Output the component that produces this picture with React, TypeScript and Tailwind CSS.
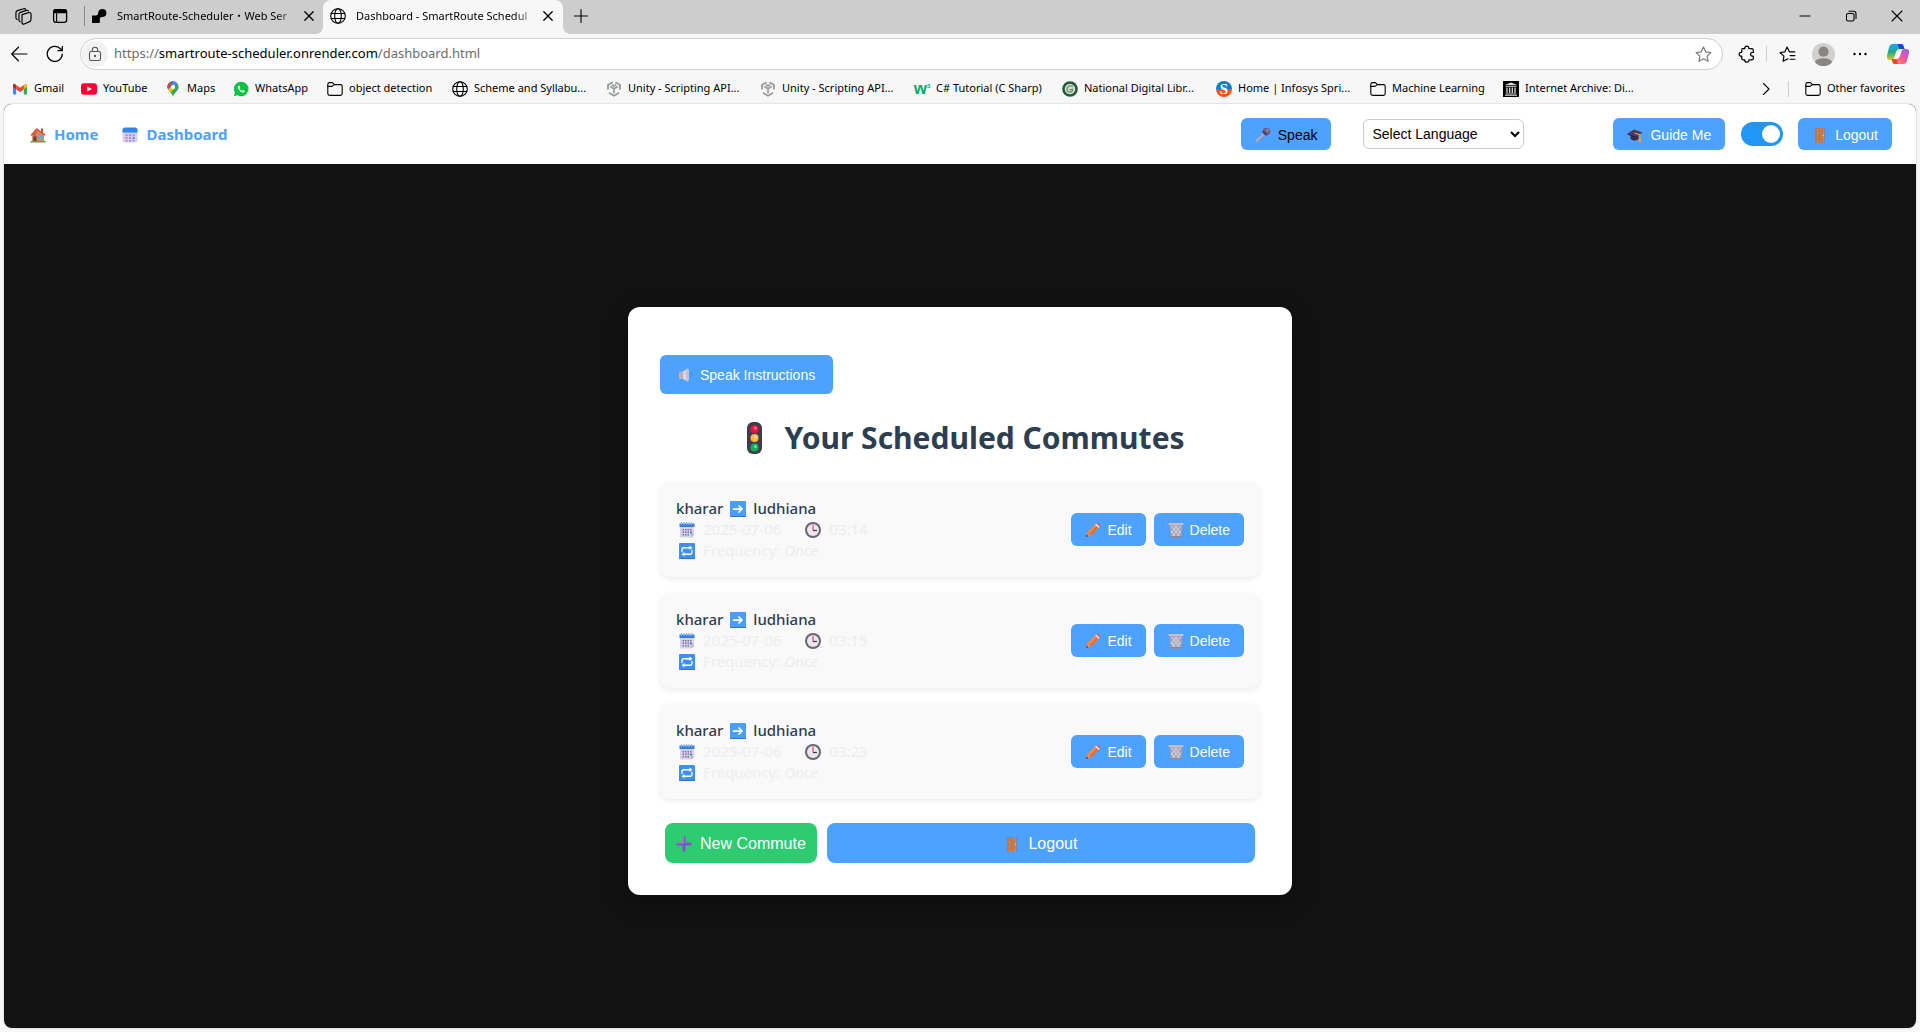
import type { ReactNode } from "react";

/* ---------- browser icons ---------- */

type IconProps = { className?: string; children?: ReactNode };

function Line({ className = "size-4", children }: IconProps) {
  return (
    <svg viewBox="0 0 16 16" className={className} fill="none" stroke="currentColor" strokeWidth="1.1" strokeLinecap="round" strokeLinejoin="round" aria-hidden="true">
      {children}
    </svg>
  );
}

const CloseIcon = () => <Line className="size-4"><path d="M3.8 3.8 L12.2 12.2 M12.2 3.8 L3.8 12.2" strokeWidth="1.3" /></Line>;

const Globe = () => (
  <Line className="size-4 shrink-0">
    <circle cx="8" cy="8" r="7.3" />
    <ellipse cx="8" cy="8" rx="3.3" ry="7.3" />
    <path d="M1.2 5.5h13.6M1.2 10.5h13.6" />
  </Line>
);

const Folder = () => (
  <Line className="size-4 shrink-0">
    <path d="M.8 3.5 Q.8 1.6 2.6 1.6 H5.4 L7.4 3.6 H13.4 Q15.2 3.6 15.2 5.4 V12.6 Q15.2 14.4 13.4 14.4 H2.6 Q.8 14.4 .8 12.6 Z" />
    <path d="M.8 5.4 H5 L7.4 3.6" />
  </Line>
);

const Workspaces = () => (
  <Line className="size-[17px]">
    <path d="M6.6 6.2 L12.8 4.3 Q15 3.8 15.1 5.8 V10.8 Q15.1 12.2 13.8 12.8 L8.8 15 Q6.6 15.6 6.6 13.6 Z" />
    <path d="M4.8 13 Q3.7 12.6 3.7 11.4 V6 Q3.7 4.6 5 4.1 L10.8 2.2 Q12.2 1.9 12.6 2.9" />
    <path d="M2 10.8 Q.9 10.4 .9 9.2 V4.4 Q.9 3 2.2 2.5 L8.2 .7 Q9.4 .4 10 1.2" />
  </Line>
);

const TabActions = () => (
  <Line className="size-4">
    <rect x="1.6" y="1.6" width="13" height="12.8" rx="2.4" strokeWidth="1.3" />
    <path d="M1.6 4 Q1.6 1.6 4 1.6 H12.2 Q14.6 1.6 14.6 4 V4.6 H1.6Z" fill="currentColor" />
    <path d="M4.6 4.6 V14.2" />
  </Line>
);

const RenderLogo = () => (
  <svg viewBox="0 0 16 16" className="size-4 shrink-0" aria-hidden="true">
    <path d="M11.2 1 A4 4 0 0 1 11.6 9 C9.8 9 9 9.6 8.8 11 V15 H1 V7.4 H4.8 C6.2 7.4 7 6.8 7.2 5.2 A4 4 0 0 1 11.2 1Z" fill="#000" />
  </svg>
);

const Gmail = () => (
  <svg viewBox="0 0 16 16" className="size-4 shrink-0" aria-hidden="true">
    <path d="M1 4.2V12.6Q1 13.6 2 13.6H4.2V6.6Z" fill="#4285f4" />
    <path d="M15 4.2V12.6Q15 13.6 14 13.6H11.8V6.6Z" fill="#34a853" />
    <path d="M11.8 4.2 13 3.1Q14.9 2.1 15 4.3V5.8L11.8 8.2Z" fill="#fbbc04" />
    <path d="M4.2 4.2 3 3.1Q1.1 2.1 1 4.3V5.8L4.2 8.2Z" fill="#c5221f" />
    <path d="M4.2 3.9 8 6.8 11.8 3.9V8.2L8 11 4.2 8.2Z" fill="#ea4335" />
  </svg>
);

const YouTube = () => (
  <svg viewBox="0 0 16 16" className="size-4 shrink-0" aria-hidden="true">
    <rect x="0" y="2.2" width="16" height="11.6" rx="3" fill="#ff0033" />
    <path d="M6.2 5.4 11 8 6.2 10.6Z" fill="#fff" />
  </svg>
);

const Maps = () => (
  <svg viewBox="0 0 16 16" className="size-4 shrink-0" aria-hidden="true">
    <clipPath id="pin"><path d="M8 .3A5.6 5.6 0 0 0 2.4 5.9C2.4 10 6.8 10.8 8 15.8 9.2 10.8 13.6 10 13.6 5.9A5.6 5.6 0 0 0 8 .3Z" /></clipPath>
    <g clipPath="url(#pin)">
      <rect width="16" height="16" fill="#34a853" />
      <path d="M0 0H8L9 4 4 9 0 5Z" fill="#1a73e8" />
      <path d="M0 0H5.8L7 3 3 7 0 6Z" fill="#ea4335" />
      <path d="M6 0H14L12 4 8 6Z" fill="#4285f4" />
      <path d="M2 9 9 3 10 7 4 13Z" fill="#fbbc04" />
    </g>
    <circle cx="8" cy="5.9" r="2" fill="#fff" />
  </svg>
);

const WhatsApp = () => (
  <svg viewBox="0 0 16 16" className="size-4 shrink-0" aria-hidden="true">
    <path d="M8.2 .8A7.2 7.2 0 1 1 4.6 14.2L.8 15.2 1.9 11.6A7.2 7.2 0 0 1 8.2 .8Z" fill="#0fc144" />
    <path d="M5.8 4.4Q4.3 5.2 5 7.2 6.3 10.3 9.2 11.5 11.4 11.9 11.8 9.9L9.9 8.9 9 9.9Q7.3 9.2 6.5 7.4L7.2 6.5 6.5 4.5Z" fill="#fff" />
  </svg>
);

const Unity = () => (
  <svg viewBox="0 0 16 16" className="size-4 shrink-0" fill="none" stroke="#999c9e" strokeWidth="1.9" aria-hidden="true">
    <path d="M6.6 1.3 2 4V8.600M9.400 1.300 14 4V8.600M3 11.800 8 14.700 13 11.800" />
    <path d="M4.200 5.600 8 7.800 11.800 5.600M8 7.800V12.300M5.800 3.800 8 5 10.200 3.800" strokeWidth="1.700" />
  </svg>
);

const W3 = () => (
  <span className="flex w-4 shrink-0 items-start justify-center font-['Liberation_Sans'] font-bold leading-none text-[#04aa6d]" aria-hidden="true">
    <span className="text-[17px] leading-3">w</span>
    <span className="text-[6px] leading-none">3</span>
  </span>
);

const Library = () => (
  <svg viewBox="0 0 16 16" className="size-4 shrink-0" aria-hidden="true">
    <circle cx="8" cy="8" r="7.8" fill="#1f5a33" />
    <circle cx="8" cy="8" r="5.3" fill="#d3dccf" />
    <path d="M11.2 5.2Q6 4 5 7.5 4.8 11.2 8 11.2 10.8 10.8 10.6 8.2L7.3 8.9" fill="none" stroke="#6f9479" strokeWidth="1.3" />
  </svg>
);

const Springboard = () => (
  <span className="grid size-4 shrink-0 place-items-center rounded-full bg-linear-to-b from-[#0c7fc4] from-50% to-[#f4511e] to-50% font-['Liberation_Serif'] text-[15px] font-bold leading-4 text-white" aria-hidden="true">S</span>
);

const Archive = () => (
  <svg viewBox="0 0 16 16" className="size-4 shrink-0" aria-hidden="true">
    <rect width="16" height="16" fill="#000" />
    <path d="M8 1.5 14 4H2ZM2.5 4.8h11v1h-11zM2.5 12.6h11v.8h-11zM2 14.2h12v.9H2z" fill="#ddd" />
    <path d="M4 6.4v5.7M6.7 6.4v5.7M9.3 6.4v5.7M12 6.4v5.7" stroke="#ddd" strokeWidth="1.3" />
  </svg>
);

const starPath = "M8 1 10.1 5.5 15 6.1 11.4 9.5 12.3 14.4 8 12 3.7 14.4 4.6 9.5 1 6.1 5.9 5.5Z";

const Copilot = () => (
  <svg viewBox="0 0 24 24" className="size-6" aria-hidden="true">
    <defs>
      <linearGradient id="cpA" x1="0" y1="0" x2="0" y2="1"><stop offset="0" stopColor="#19a7f0" /><stop offset=".5" stopColor="#24a88a" /><stop offset="1" stopColor="#f0c419" /></linearGradient>
      <linearGradient id="cpB" x1="1" y1="0" x2="0" y2="1"><stop offset="0" stopColor="#9b5cf0" /><stop offset=".5" stopColor="#f0579b" /><stop offset="1" stopColor="#ffa047" /></linearGradient>
    </defs>
    <path d="M6.5 2H15.5Q17 2 17.5 4L18.5 7H14Q11 7 10 10L8 16Q7.5 18 5.5 18H4Q0 18 1.2 12.5L3 5.5Q4 2 6.5 2Z" fill="url(#cpA)" />
    <path d="M12 2h3.5Q17 2 17.5 4L18.5 7H14.5Q13 7 12.5 5Z" fill="#1747c4" />
    <path d="M17.5 22H8.5Q7 22 6.5 20L5.5 17H10Q13 17 14 14L16 8Q16.5 7 18.5 7H20Q24 7 22.8 12L21 18.5Q20 22 17.5 22Z" fill="url(#cpB)" />
    <path d="M5.5 17H9.5Q11 17 11.5 19.5L12 22H8.5Q7 22 6.5 20Z" fill="#ee4a2b" />
  </svg>
);

/* ---------- page pictograms ---------- */

function Pic({ className = "size-4", children }: IconProps) {
  return <svg viewBox="0 0 32 32" className={`${className} shrink-0`} aria-hidden="true">{children}</svg>;
}

const House = () => (
  <Pic>
    <path d="M22 3h4v9h-4z" fill="#a5573c" />
    <path d="M5 14 14 6 28 14V29H5Z" fill="#d9895b" />
    <path d="M14 6 5 15V29H12V14Z" fill="#b96f4c" />
    <path d="M13 2 31 15 29 17.5 14 7 3 18 1 16Z" fill="#e2563a" />
    <path d="M7 19h6v10H7z" fill="#6b3f37" />
    <path d="M18 16h7v8h-7z" fill="#4fb5f2" />
    <path d="M1 28h30v3H1z" fill="#3fae55" />
  </Pic>
);

const Calendar = () => (
  <Pic>
    <rect x="1" y="2" width="30" height="29" rx="4" fill="#d9cdf0" />
    <path d="M1 11V6Q1 1 6 1H26Q31 1 31 6V11Z" fill="#2f86ea" />
    <path d="M7 15h4v3.500H7zM14 15h4v3.500h-4zM21 15h4v3.500h-4zM7 20.500h4V24H7zM14 20.500h4V24h-4zM7 26h4v3H7zM14 26h4v3h-4zM21 26h4v3h-4z" fill="#9a8fb8" />
    <path d="M21 20.500h4V24h-4z" fill="#2f86ea" />
  </Pic>
);

const SpiralCalendar = () => (
  <Pic>
    <path d="M2 4H30V25L25 31H4Q2 31 2 29Z" fill="#d8d0ea" />
    <path d="M30 25 25 31V25Z" fill="#a89cc6" />
    <path d="M1 3H31V10H1Z" fill="#3b7fdc" />
    <path d="M5 0v6M10 0v6M15 0v6M20 0v6M25 0v6" stroke="#8bb4ee" strokeWidth="2" />
    <path d="M7 14h3v3H7zM12 14h3v3h-3zM17 14h3v3h-3zM7 19h3v3H7zM12 19h3v3h-3zM17 19h3v3h-3zM7 24h3v3H7zM12 24h3v3h-3zM17 24h3v3h-3zM22 14h3v3h-3z" fill="#7d7397" />
    <path d="M22 19h4v4h-4z" fill="#2f86ea" />
  </Pic>
);

const Mic = () => (
  <Pic>
    <path d="M18 11 22 15 5 30 2 29 1.500 27Z" fill="#9a93a3" />
    <path d="M18 11 20 13 3 29.500 2 29 1.500 27Z" fill="#b9b3c0" />
    <circle cx="23" cy="9" r="7.500" fill="#6d5c80" />
    <path d="M16.500 7 25 16 22 17 15 10Z" fill="#463a56" />
    <circle cx="25" cy="6.500" r="3" fill="#94839f" />
  </Pic>
);

const Cap = () => (
  <Pic>
    <path d="M7 15V24Q15 30 23 24V15Z" fill="#3c2a48" />
    <path d="M1 13 14 5 31 11 18 20Z" fill="#4b3a5c" />
    <path d="M1 13 18 20V22L1 15Z" fill="#2c1f38" />
    <path d="M15 12 26 16V26" fill="none" stroke="#f09a45" strokeWidth="2.500" />
    <path d="M24 23h4l1 7h-6z" fill="#f09a45" />
  </Pic>
);

const Door = () => (
  <Pic>
    <path d="M7 2H25V31H7Z" fill="#b5673f" />
    <path d="M9 3H24V31H9Z" fill="#d08758" />
    <path d="M12 6h9v6h-9zM12 15h9v5h-9zM12 23h9v5h-9z" fill="#c47b4d" stroke="#b56c44" />
    <circle cx="22.500" cy="17" r="1.300" fill="#f7d070" />
  </Pic>
);

const Speaker = () => (
  <Pic>
    <path d="M2 9H11V24H2Z" fill="#b8afbf" />
    <path d="M10 9 19 3Q22 3 22 16 22 29 19 29L10 24Z" fill="#ddd6e2" />
    <ellipse cx="19" cy="16" rx="3" ry="13" fill="#c7bfd0" />
    <path d="M25 10Q29 16 25 22" fill="none" stroke="#3689e8" strokeWidth="2" strokeDasharray="3 2" />
  </Pic>
);

const TrafficLight = () => (
  <svg viewBox="0 0 15 32" className="h-8 w-[15px] shrink-0" aria-hidden="true">
    <rect x="0" y="0" width="15" height="32" rx="6" fill="#433b4d" />
    <circle cx="7.500" cy="7" r="4" fill="#e8173f" />
    <circle cx="7.500" cy="16" r="4" fill="#fbb548" />
    <circle cx="7.500" cy="25.500" r="4" fill="#0fae5c" />
    <circle cx="8.500" cy="6" r="1.500" fill="#ff7d95" />
    <circle cx="8.500" cy="15" r="1.500" fill="#ffe0a0" />
    <circle cx="8.500" cy="24.500" r="1.500" fill="#6fe3a0" />
  </svg>
);

const ArrowBox = () => (
  <Pic>
    <rect width="32" height="32" rx="2" fill="#4b9ef8" />
    <path d="M0 30h32v2H0z" fill="#3575d8" />
    <path d="M7 16H24M18 10 24 16 18 22" fill="none" stroke="#fff" strokeWidth="3.500" strokeLinecap="round" strokeLinejoin="round" />
  </Pic>
);

const RepeatBox = () => (
  <Pic>
    <rect width="32" height="32" rx="2" fill="#3f8ff2" />
    <path d="M0 30h32v2H0z" fill="#3575d8" />
    <path d="M6 17V13Q6 9.500 9 9.500H22M26 15V19Q26 22.500 23 22.500H10" fill="none" stroke="#fff" strokeWidth="2.600" strokeLinecap="round" />
    <path d="M21 5 27 9.500 21 14ZM11 18 5 22.500 11 27Z" fill="#fff" />
  </Pic>
);

const Clock = () => (
  <Pic>
    <circle cx="16" cy="16" r="16" fill="#6a6470" />
    <circle cx="16" cy="16" r="12" fill="#ebe6ef" />
    <path d="M16 17V5.500" stroke="#f04863" strokeWidth="2.500" />
    <path d="M16 17H24" stroke="#433b4d" strokeWidth="2.500" />
  </Pic>
);

const Pencil = () => (
  <Pic>
    <path d="M5 20 20 5 27 12 12 27Z" fill="#f7883f" />
    <path d="M8.500 23.500 23.500 8.500 27 12 12 27Z" fill="#e96c35" />
    <path d="M20 5 22.500 2.500 29.500 9.500 27 12Z" fill="#f3dfe3" />
    <path d="M22.500 2.500Q25 0 28 3T29.500 9.500Z" fill="#f2555f" />
    <path d="M5 20 12 27 2 30Z" fill="#f08a4a" />
    <path d="M3.500 25 6.800 28.500 2 30Z" fill="#433b4d" />
  </Pic>
);

const Bin = () => (
  <Pic>
    <path d="M3 5H29L26 31H6Z" fill="#a9a5b4" />
    <path d="M7 8 24 29M13 7 25 22M7 18 15 30M25 8 8 29M19 7 6 22M25 18 17 30" stroke="#e2e6f0" strokeWidth="1.500" />
    <path d="M1 2H31V6H1Z" fill="#c4bfce" />
    <path d="M5 28H27V31H5Z" fill="#8b8596" />
  </Pic>
);

const PlusPic = () => (
  <Pic>
    <path d="M13 1h6v12h12v6H19v12h-6V19H1v-6h12z" fill="#7d57c4" />
    <path d="M13 1h2.500v14H1v-2h12z" fill="#a487dd" />
  </Pic>
);

/* ---------- data ---------- */

const bookmarks = [
  { label: "Gmail", icon: <Gmail />, width: "w-[69px]" },
  { label: "YouTube", icon: <YouTube />, width: "w-[84px]" },
  { label: "Maps", icon: <Maps />, width: "w-[68px]" },
  { label: "WhatsApp", icon: <WhatsApp />, width: "w-[94px]" },
  { label: "object detection", icon: <Folder />, width: "w-[125px]" },
  { label: "Scheme and Syllabu...", icon: <Globe />, width: "w-[154px]" },
  { label: "Unity - Scripting API...", icon: <Unity />, width: "w-[154px]" },
  { label: "Unity - Scripting API...", icon: <Unity />, width: "w-[154px]" },
  { label: "C# Tutorial (C Sharp)", icon: <W3 />, width: "w-[148px]" },
  { label: "National Digital Libr...", icon: <Library />, width: "w-[154px]" },
  { label: "Home | Infosys Spri...", icon: <Springboard />, width: "w-[154px]" },
  { label: "Machine Learning", icon: <Folder />, width: "w-[133px]" },
  { label: "Internet Archive: Di...", icon: <Archive />, width: "w-[154px]" },
];

const commutes = [
  { from: "kharar", to: "ludhiana", date: "2025-07-06", time: "03:14", frequency: "Once" },
  { from: "kharar", to: "ludhiana", date: "2025-07-06", time: "03:15", frequency: "Once" },
  { from: "kharar", to: "ludhiana", date: "2025-07-06", time: "03:23", frequency: "Once" },
];

/* ---------- sections ---------- */

function TabStrip() {
  return (
    <header className="flex h-[34px] items-center bg-[#cdcdcd] text-[11px]">
      <div className="flex h-full items-center pb-0.5">
        <button aria-label="Workspaces" className="ml-[15px]"><Workspaces /></button>
        <button aria-label="Tab actions" className="ml-5"><TabActions /></button>
        <div className="ml-4 h-5 w-px bg-[#8a8a8a]" />
        <div className="flex w-[238px] items-center pl-1.5">
          <RenderLogo />
          <span className="ml-2.5 flex-1 whitespace-nowrap [mask-image:linear-gradient(to_right,black_86%,transparent)]">
            SmartRoute-Scheduler・Web Ser
          </span>
          <button aria-label="Close tab" className="mr-1.5"><CloseIcon /></button>
        </div>
      </div>
      <div className="relative flex h-full w-[240px] items-center rounded-t-lg bg-[#f7f7f7] pb-0.5 pl-[7px]">
        <span className="absolute bottom-0 -left-2 size-2 bg-[radial-gradient(circle_at_0_0,#cdcdcd_8px,#f7f7f7_8px)]" />
        <span className="absolute -right-2 bottom-0 size-2 bg-[radial-gradient(circle_at_100%_0,#cdcdcd_8px,#f7f7f7_8px)]" />
        <Globe />
        <span className="ml-2.5 flex-1 whitespace-nowrap [mask-image:linear-gradient(to_right,black_86%,transparent)]">
          Dashboard - SmartRoute Schedul
        </span>
        <button aria-label="Close tab" className="mr-[7px]"><CloseIcon /></button>
      </div>
      <div className="flex h-full flex-1 items-center pb-0.5">
        <button aria-label="New tab" className="ml-2.5"><Line><path d="M8 1.5V14.5M1.5 8H14.5" /></Line></button>
        <div className="ml-auto flex items-center gap-[30px] pr-[15px]">
          <button aria-label="Minimize"><Line><path d="M3 8H13" /></Line></button>
          <button aria-label="Restore">
            <Line><rect x="3.5" y="5.5" width="7.5" height="7.5" rx="1.5" /><path d="M6 3.3H10.5Q13 3.3 13 6V10.5" /></Line>
          </button>
          <button aria-label="Close window"><Line><path d="M3 3 13 13M13 3 3 13" /></Line></button>
        </div>
      </div>
    </header>
  );
}

function Toolbar() {
  return (
    <div className="flex h-10 items-center">
      <button aria-label="Back" className="ml-2.5"><Line className="size-[18px]"><path d="M15 8H1.5M7.5 2 1.5 8 7.5 14" /></Line></button>
      <button aria-label="Refresh" className="ml-[18px]">
        <Line className="size-[18px]"><path d="M14.5 8A6.7 6.7 0 1 1 12.5 3.1L14.3 4.8M14.5 1.2V5H10.6" /></Line>
      </button>
      <div className="ml-4 flex h-8 flex-1 items-center rounded-full border border-[#cfcfcf] bg-white pr-2.5 pl-px">
        <span className="grid size-[26px] place-items-center rounded-full bg-[#f2f2f2] text-[#555]">
          <Line><rect x="2.5" y="5.5" width="11" height="9" rx="1.8" /><path d="M5.3 5.5V4Q5.3 1.2 8 1.2T10.7 4V5.5" /><circle cx="8" cy="10" r=".6" fill="currentColor" /></Line>
        </span>
        <div className="ml-1.5 flex-1 text-[13px] text-[#6b6b6b]">
          https://<span className="text-black">smartroute-scheduler.onrender.com</span>/dashboard.html
        </div>
        <button aria-label="Add to favorites" className="text-[#777]"><Line className="size-[17px]"><path d={starPath} /></Line></button>
      </div>
      <div className="ml-[15px] flex items-center">
        <button aria-label="Extensions">
          <Line className="size-[18px]"><path d="M3.6 3.3H6Q5.8 1 7.8 1T9.7 3.3H12.3Q13.6 3.3 13.6 4.6V6.6Q11.2 6.4 11.2 8.2T13.6 9.9V12Q13.6 13.3 12.3 13.3H9.7Q9.8 15.3 7.9 15.3T6 13.3H4.6Q3.3 13.3 3.3 12V9.9Q1 10.1 1 8.2T3.3 6.5V4.3" /></Line>
        </button>
        <div className="ml-2.5 h-4 w-px bg-[#cfcfcf]" />
        <button aria-label="Favorites" className="ml-3">
          <Line className="size-[17px]"><path d="M8.5 12 3.9 14.4 4.6 9.5 1 6.1 5.6 5.5 7.6 1 9.8 5.5H15M10.5 9H15M10.5 12.5H15" /></Line>
        </button>
        <button aria-label="Profile" className="ml-4">
          <svg viewBox="0 0 24 24" className="size-[23px]" aria-hidden="true"><clipPath id="av"><circle cx="12" cy="12" r="12" /></clipPath><circle cx="12" cy="12" r="12" fill="#d2d0ce" /><circle cx="12" cy="9" r="5.3" fill="#8a8580" /><ellipse cx="12" cy="21" rx="9" ry="5.2" fill="#8a8580" clipPath="url(#av)" /></svg>
        </button>
        <button aria-label="Settings and more" className="ml-[17px]">
          <Line><g fill="currentColor" stroke="none"><circle cx="2.5" cy="8" r="1.2" /><circle cx="8" cy="8" r="1.2" /><circle cx="13.5" cy="8" r="1.2" /></g></Line>
        </button>
        <button aria-label="Copilot" className="mr-2.5 ml-[18px]"><Copilot /></button>
      </div>
    </div>
  );
}

function BookmarksBar() {
  return (
    <nav aria-label="Favorites bar" className="flex h-[29px] items-center pl-3 text-[11px]">
      {bookmarks.map((b, i) => (
        <a key={i} href="#" className={`flex shrink-0 items-center gap-1.5 whitespace-nowrap ${b.width}`}>
          {b.icon}
          {b.label}
        </a>
      ))}
      <button aria-label="More favorites" className="ml-auto"><Line><path d="M5.5 2.5 11 8 5.5 13.5" /></Line></button>
      <div className="ml-3.5 h-4 w-px bg-[#cfcfcf]" />
      <a href="#" className="mr-[15px] ml-4 flex items-center gap-1.5 whitespace-nowrap">
        <Folder />
        Other favorites
      </a>
    </nav>
  );
}

function SiteNav() {
  const pill = "flex h-8 items-center gap-[7px] rounded-md bg-[#4da1ff] px-3.5 pt-px font-['Liberation_Sans',sans-serif] text-sm";
  return (
    <nav className="flex h-[60px] items-center bg-white pr-6 pl-[26px]">
      <a href="#" className="flex items-center gap-2 pt-px text-[15px] font-bold text-[#4da1ff]"><House />Home</a>
      <a href="#" className="ml-6 flex items-center gap-2 pt-px text-[15px] font-bold text-[#4da1ff]"><Calendar />Dashboard</a>
      <button className={`${pill} ml-auto text-black`}><Mic />Speak</button>
      <select aria-label="Language" className="ml-8 h-[30px] w-[161px] rounded-md border border-[#ccc] bg-white px-1 font-['Liberation_Sans',sans-serif] text-sm">
        <option>Select Language</option>
      </select>
      <button className={`${pill} ml-[89px] text-white`}><Cap />Guide Me</button>
      <label className="ml-4 flex h-6 w-[42px] cursor-pointer items-center rounded-full bg-[#ccc] px-[3px] has-checked:justify-end has-checked:bg-[#2196f3]">
        <input type="checkbox" defaultChecked aria-label="Dark mode" className="sr-only" />
        <span className="size-[18px] rounded-full bg-white" />
      </label>
      <button className={`${pill} ml-[15px] text-white`}><Door />Logout</button>
    </nav>
  );
}

function CommuteItem({ c }: { c: (typeof commutes)[number] }) {
  const action = "flex h-[33px] items-center gap-1.5 rounded-md bg-[#4da1ff] px-3.5 pt-px font-['Liberation_Sans',sans-serif] text-sm text-white";
  return (
    <li className="flex items-center justify-between rounded-[10px] bg-[#f9f9f9] p-4 shadow-[0_2px_6px_rgba(0,0,0,0.08)]">
      <div className="text-[15px] leading-[21px] text-[#eee]">
        <p className="flex items-center gap-[7px] font-medium text-[#2c3e50]">{c.from}<ArrowBox />{c.to}</p>
        <p className="flex items-center gap-2 pl-[3px]">
          <SpiralCalendar />{c.date}
          <span className="ml-4 flex items-center gap-2"><Clock />{c.time}</span>
        </p>
        <p className="flex items-center gap-2 pl-[3px]"><RepeatBox /><span>Frequency: <em>{c.frequency}</em></span></p>
      </div>
      <div className="flex gap-2">
        <button className={action}><Pencil />Edit</button>
        <button className={action}><Bin />Delete</button>
      </div>
    </li>
  );
}

export default function App() {
  return (
    <div className="flex min-h-screen flex-col bg-[#f7f7f7] font-['Noto_Sans','Noto_Sans_CJK_JP',sans-serif] text-black">
      <TabStrip />
      <Toolbar />
      <BookmarksBar />
      <div className="mx-1 mt-px mb-1 flex flex-1 flex-col overflow-hidden rounded-lg bg-[#121212] shadow-[0_0_2px_rgba(0,0,0,0.25)]">
        <SiteNav />
        <main className="flex flex-1 items-center justify-center pt-2.5">
          <section className="w-full max-w-[664px] rounded-xl bg-white px-8 pt-12 pb-8 shadow-[0_8px_24px_rgba(0,0,0,0.3)]">
            <button className="flex h-[39px] items-center gap-1.5 rounded-md bg-[#4da1ff] px-[18px] pt-px font-['Liberation_Sans',sans-serif] text-sm text-white">
              <Speaker />Speak Instructions
            </button>
            <h1 className="mt-[22px] flex items-center justify-center gap-[22px] pl-3 text-[30px] leading-[44px] font-bold text-[#2c3e50]">
              <TrafficLight />Your Scheduled Commutes
            </h1>
            <ul className="mt-[22px] flex flex-col gap-4">
              {commutes.map((c) => <CommuteItem key={c.time} c={c} />)}
            </ul>
            <div className="mt-6 flex gap-2.5 px-[5px] font-['Liberation_Sans',sans-serif] text-base text-white">
              <button className="flex h-10 items-center gap-2 rounded-lg bg-[#2ecc71] px-[11px] pt-px"><PlusPic />New Commute</button>
              <button className="flex h-10 flex-1 items-center justify-center gap-2 rounded-lg bg-[#4da1ff] pt-px"><Door />Logout</button>
            </div>
          </section>
        </main>
      </div>
    </div>
  );
}
